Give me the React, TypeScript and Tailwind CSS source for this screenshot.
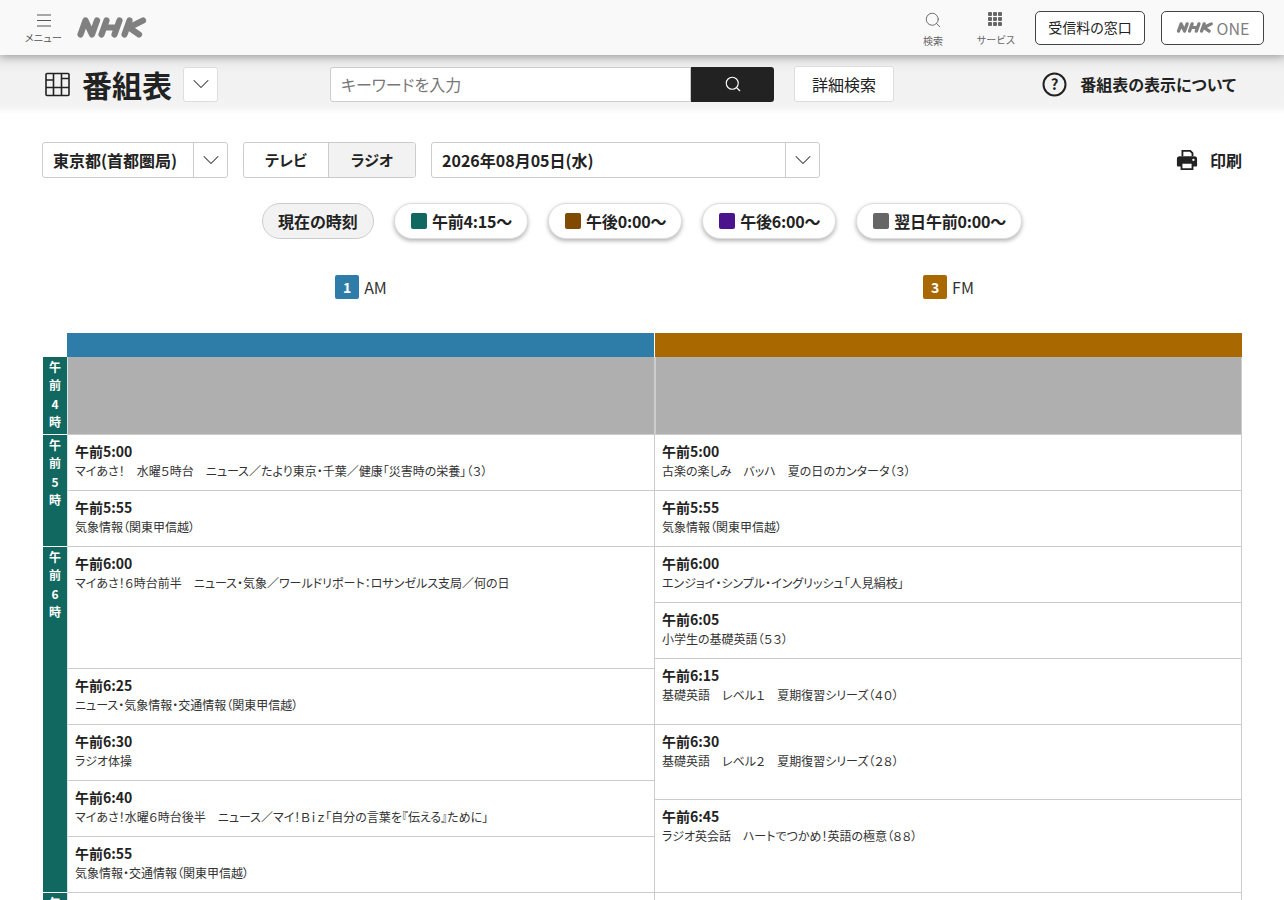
import { ChevronDown, Search } from 'lucide-react';

const FONT = '"Noto Sans CJK JP", "Noto Sans", sans-serif';

const NhkLogo = ({ className }: { className?: string }) => (
  <svg viewBox="0 0 70 21" className={className} fill="none" stroke="currentColor" strokeWidth="6.2" strokeLinecap="round" strokeLinejoin="round">
    <path d="M3.5 17.5 L8.5 3.5 L15 17.5 L20 3.5" />
    <path d="M29.5 3.5 L24.5 17.5 M42.5 3.5 L37.5 17.5 M27 10.5 H40" />
    <path d="M52.5 3.5 L47.5 17.5 M66 3.5 L52 10.5 L62 17.5" />
  </svg>
);

const Chevron = () => <ChevronDown size={28} strokeWidth={0.9} className="text-[#333]" />;

const TimeButton = ({ color, label }: { color: string; label: string }) => (
  <div className="h-[36px] pl-[16px] pr-[15px] flex items-center gap-[5px] rounded-full bg-white border border-[#ddd] shadow-[0_2px_4px_rgba(0,0,0,0.3)] text-[16px] font-bold text-[#222] tracking-[-0.2px]">
    <span className={`w-4 h-4 rounded-[2px] ${color}`} />
    {label}
  </div>
);

const Program = ({ h, time, title }: { h: string; time?: string; title?: string }) => (
  <div className={`${h} bg-white border-b border-[#ccc] pl-[7px] pt-[6px] overflow-hidden`}>
    <p className="text-[14px] leading-[20px] font-bold text-[#222]">{time}</p>
    <p className="mt-[1px] text-[12px] leading-[18px] text-[#333] whitespace-nowrap">{title}</p>
  </div>
);

const HourCell = ({ h, chars }: { h: string; chars: string[] }) => (
  <div className={`${h} bg-[#116860] border-b border-white flex flex-col items-center pt-[1px] text-white text-[12px] leading-[18.4px] font-bold`}>
    {chars.map((c, i) => (
      <span key={i}>{c}</span>
    ))}
  </div>
);

const am = [
  { h: 'h-[56px]', time: '午前5:00', title: 'マイあさ！　水曜５時台　ニュース／たより東京・千葉／健康「災害時の栄養」（３）' },
  { h: 'h-[56px]', time: '午前5:55', title: '気象情報（関東甲信越）' },
  { h: 'h-[122px]', time: '午前6:00', title: 'マイあさ！６時台前半　ニュース・気象／ワールドリポート：ロサンゼルス支局／何の日' },
  { h: 'h-[56px]', time: '午前6:25', title: 'ニュース・気象情報・交通情報（関東甲信越）' },
  { h: 'h-[56px]', time: '午前6:30', title: 'ラジオ体操' },
  { h: 'h-[56px]', time: '午前6:40', title: 'マイあさ！水曜６時台後半　ニュース／マイ！Ｂｉｚ「自分の言葉を『伝える』ために」' },
  { h: 'h-[56px]', time: '午前6:55', title: '気象情報・交通情報（関東甲信越）' },
];

const fm = [
  { h: 'h-[56px]', time: '午前5:00', title: '古楽の楽しみ　バッハ　夏の日のカンタータ（３）' },
  { h: 'h-[56px]', time: '午前5:55', title: '気象情報（関東甲信越）' },
  { h: 'h-[56px]', time: '午前6:00', title: 'エンジョイ・シンプル・イングリッシュ「人見絹枝」' },
  { h: 'h-[56px]', time: '午前6:05', title: '小学生の基礎英語（５３）' },
  { h: 'h-[66px]', time: '午前6:15', title: '基礎英語　レベル１　夏期復習シリーズ（４０）' },
  { h: 'h-[75px]', time: '午前6:30', title: '基礎英語　レベル２　夏期復習シリーズ（２８）' },
  { h: 'h-[93px]', time: '午前6:45', title: 'ラジオ英会話　ハートでつかめ！英語の極意（８８）' },
];

export default function App() {
  return (
    <div className="h-[900px] overflow-hidden bg-white text-[#222] [font-feature-settings:'palt']" style={{ fontFamily: FONT }}>
      <header className="relative z-10 h-[55px] bg-[#f9f9f9] shadow-[0_2px_8px_rgba(0,0,0,0.3)] flex items-center pl-[24px] pr-[20px]">
        <div className="w-[39px] flex flex-col items-center pt-[3px] text-[#555]">
          <svg width="16" height="15" viewBox="0 0 16 15" stroke="currentColor" strokeWidth="1.2" fill="none">
            <path d="M1 2 H15 M1 7.5 H15 M1 13 H15" />
          </svg>
          <span className="text-[10px] leading-[14px] mt-[3px] whitespace-nowrap tracking-[0.3px]">メニュー</span>
        </div>
        <NhkLogo className="w-[70px] h-[21px] ml-[14px] text-[#808080]" />
        <div className="ml-auto flex flex-col items-center w-[40px] text-[#666]">
          <Search size={18} strokeWidth={1.25} className="mt-[3px]" />
          <span className="text-[10px] leading-[14px] mt-[5px]">検索</span>
        </div>
        <div className="ml-[23px] flex flex-col items-center w-[40px] text-[#666]">
          <svg width="16" height="16" viewBox="0 0 16 16" fill="currentColor" className="mt-[3px]">
            {[1, 6, 11].map((y) =>
              [1, 6, 11].map((x) => <rect key={`${x}-${y}`} x={x - 1} y={y - 1} width="4" height="4" rx="1" />),
            )}
          </svg>
          <span className="text-[10px] leading-[14px] mt-[5px] whitespace-nowrap tracking-[0.3px]">サービス</span>
        </div>
        <div className="ml-[19px] w-[110px] h-[34px] border border-[#444] rounded-[5px] bg-white flex items-center justify-center text-[14px] text-[#222]">
          受信料の窓口
        </div>
        <div className="ml-[16px] w-[103px] h-[34px] border border-[#444] rounded-[5px] bg-white flex items-center justify-center gap-[3px] text-[#808080]">
          <NhkLogo className="w-[38px] h-[11px]" />
          <span className="text-[16px] leading-none">ONE</span>
        </div>
      </header>

      <div className="h-[58px] bg-gradient-to-b from-[#e6e6e6] via-[#f2f2f2] via-30% to-[#f3f3f3] flex items-center pl-[45px] pr-[48px] relative">
        <svg width="25" height="25" viewBox="0 0 25 25" fill="none" stroke="#222" strokeWidth="1.6">
          <rect x="1" y="1.5" width="23" height="22" rx="1" />
          <path d="M8.5 1.5 V23.5 M16.5 1.5 V23.5 M1 8 H8.5 M16.5 6.5 H24 M1 15.5 H24" />
        </svg>
        <h1 className="ml-[12px] text-[30px] leading-none font-bold text-[#222]">番組表</h1>
        <div className="ml-[11px] w-[35px] h-[35px] bg-white border border-[#ddd] rounded-[3px] flex items-center justify-center">
          <Chevron />
        </div>
        <div className="ml-[112px] w-[444px] h-[35px] flex">
          <div className="flex-1 bg-white border border-[#ccc] rounded-l-[3px] pl-[10px] flex items-center text-[16px] text-[#777]">
            キーワードを入力
          </div>
          <div className="w-[83px] bg-[#222] rounded-r-[3px] flex items-center justify-center text-white">
            <Search size={18} strokeWidth={1.5} />
          </div>
        </div>
        <div className="ml-[20px] w-[100px] h-[36px] bg-white border border-[#ddd] rounded-[3px] flex items-center justify-center text-[16px] text-[#222]">
          詳細検索
        </div>
        <div className="ml-auto flex items-center gap-[13px]">
          <svg width="25" height="25" viewBox="0 0 25 25" fill="none">
            <circle cx="12.5" cy="12.5" r="11" stroke="#222" strokeWidth="2" />
            <text x="12.5" y="18" textAnchor="middle" fontSize="15" fontWeight="700" fill="#222">?</text>
          </svg>
          <span className="text-[16px] font-bold text-[#222]">番組表の表示について</span>
        </div>
        <div className="absolute left-0 right-0 bottom-[-1px] h-[8px] bg-gradient-to-b from-[#f3f3f3] to-white" />
      </div>

      <main className="px-[42px]">
        <div className="mt-[29px] flex items-center h-[36px]">
          <div className="w-[186px] h-[36px] border border-[#ccc] rounded-[3px] flex items-center">
            <span className="flex-1 pl-[10px] text-[16px] font-bold">東京都(首都圏局)</span>
            <span className="w-[34px] h-[34px] border-l border-[#ccc] flex items-center justify-center">
              <Chevron />
            </span>
          </div>
          <div className="ml-[15px] w-[173px] h-[36px] border border-[#ccc] rounded-[3px] flex text-[15px] font-bold overflow-hidden">
            <span className="w-[85px] flex items-center justify-center border-r border-[#ccc]">テレビ</span>
            <span className="flex-1 flex items-center justify-center bg-[#f2f2f2]">ラジオ</span>
          </div>
          <div className="ml-[15px] w-[389px] h-[36px] border border-[#ccc] rounded-[3px] flex items-center">
            <span className="flex-1 pl-[10px] text-[16px] font-bold">2026年08月05日(水)</span>
            <span className="w-[34px] h-[34px] border-l border-[#ccc] flex items-center justify-center">
              <Chevron />
            </span>
          </div>
          <div className="ml-auto flex items-center gap-[12px]">
            <svg width="22" height="22" viewBox="0 0 24 24" fill="#222">
              <path d="M6 1 H16 L19 4 V8 H17 V5 L15 3 H8 V8 H6 Z" />
              <path d="M4 8 H20 A3 3 0 0 1 23 11 V18 A1 1 0 0 1 22 19 H19 V23 H5 V19 H2 A1 1 0 0 1 1 18 V11 A3 3 0 0 1 4 8 Z M7 16 V21 H17 V16 Z M19 10.5 A1.3 1.3 0 1 0 19 13.1 A1.3 1.3 0 1 0 19 10.5 Z" fillRule="evenodd" />
            </svg>
            <span className="text-[16px] font-bold">印刷</span>
          </div>
        </div>

        <div className="mt-[25px] flex justify-center gap-[20px]">
          <div className="h-[36px] w-[112px] flex items-center justify-center rounded-full bg-[#f2f2f2] border border-[#ccc] text-[16px] font-bold">現在の時刻</div>
          <TimeButton color="bg-[#116860]" label="午前4:15～" />
          <TimeButton color="bg-[#804a00]" label="午後0:00～" />
          <TimeButton color="bg-[#4b148c]" label="午後6:00～" />
          <TimeButton color="bg-[#666666]" label="翌日午前0:00～" />
        </div>

        <div className="mt-[36px] ml-[25px] flex h-[24px]">
          <div className="w-[588px] flex items-center justify-center gap-[5px]">
            <span className="w-[24px] h-[24px] rounded-[2px] bg-[#2e7ca8] text-white text-[14px] font-bold flex items-center justify-center">1</span>
            <span className="text-[16px] text-[#333]">AM</span>
          </div>
          <div className="flex-1 flex items-center justify-center gap-[5px]">
            <span className="w-[24px] h-[24px] rounded-[2px] bg-[#a96800] text-white text-[14px] font-bold flex items-center justify-center">3</span>
            <span className="text-[16px] text-[#333]">FM</span>
          </div>
        </div>

        <div className="mt-[34px] ml-[1px] flex">
          <div className="w-[24px] pt-[24px] flex flex-col">
            <HourCell h="h-[78px]" chars={['午', '前', '4', '時']} />
            <HourCell h="h-[112px]" chars={['午', '前', '5', '時']} />
            <HourCell h="h-[346px]" chars={['午', '前', '6', '時']} />
            <HourCell h="h-[80px]" chars={['午', '前', '7', '時']} />
          </div>
          <div className="w-[588px]">
            <div className="h-[24px] bg-[#2e7ca8] mr-[1px]" />
            <div className="border-l border-r border-l-[#d5e3e5] border-r-[#ccc]">
              <div className="h-[78px] bg-[#afafaf] border-b border-[#ccc]" />
              {am.map((p) => (
                <Program key={p.time} {...p} />
              ))}
              <Program h="h-[60px]" />
            </div>
          </div>
          <div className="flex-1">
            <div className="h-[24px] bg-[#a96800]" />
            <div className="border-r border-[#ccc]">
              <div className="h-[78px] bg-[#afafaf] border-b border-l border-[#ccc]" />
              {fm.map((p) => (
                <Program key={p.time} {...p} />
              ))}
              <Program h="h-[60px]" />
            </div>
          </div>
        </div>
      </main>
    </div>
  );
}
